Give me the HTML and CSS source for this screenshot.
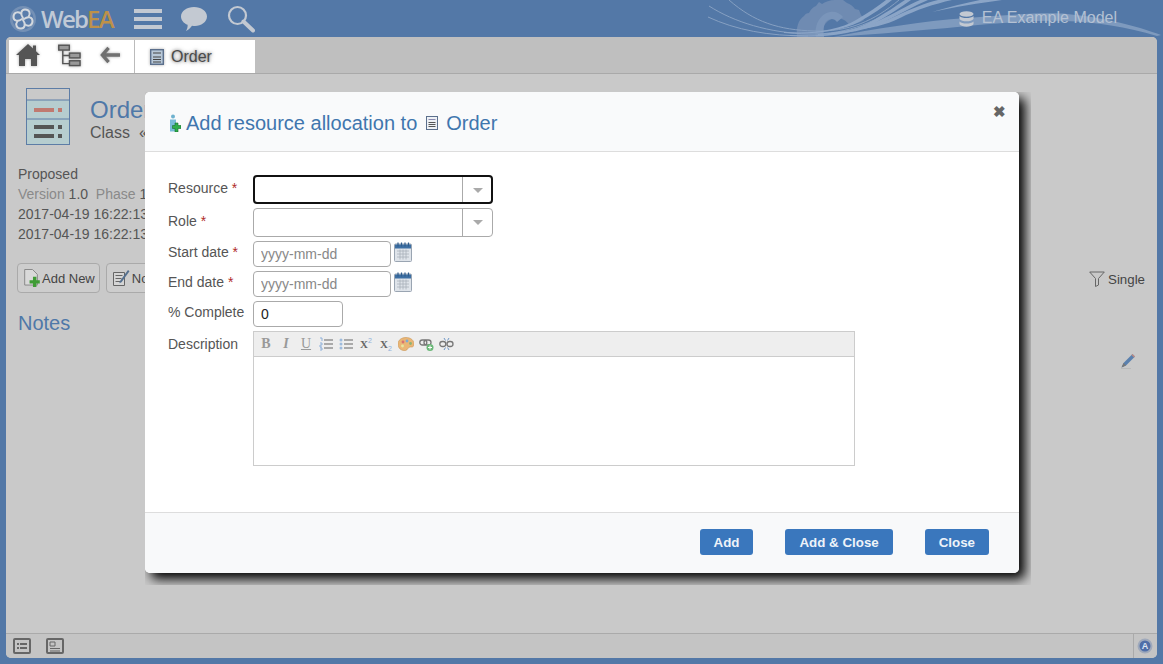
FILE: index.html
```html
<!DOCTYPE html>
<html lang="en">
<head>
<meta charset="utf-8">
<title>WebEA</title>
<link rel="stylesheet" href="styles.css">
</head>
<body>
<div class="app">
  <header class="top">
    <svg class="swirl" viewBox="0 0 463 37" width="463" height="37">
      <path d="M97 37c-1-9 1-17 7-21 1-2 3-3 5-3 2-4 4-6 7-7l3-4 3 2c3-2 8-4 13-4h8l4 3c3 1 6 3 8 6l4 1 2 5c1 1 2 3 3 5-5 3-10 4-15 5-2-4-7-7-12-7-9 0-16 8-16 19z" fill="#6f8bb2"/>
      <path d="M116 37c-2-10 3-23 14-25 5-1 10 1 13 5l-6 5c-2-3-6-4-9-2-4 2-5 8-4 17z" fill="#7a95ba"/>
      <g fill="none" stroke="#86a0c2" stroke-width="1">
        <path d="M29 0c25 22 50 30 85 31 35 1 60-10 85-31"/>
        <path d="M9 6c25 16 60 27 100 28 40 1 70-14 100-34"/>
        <path d="M8 17c28 13 60 19 100 19"/>
      </g>
      <g fill="#8ba5c7">
        <path d="M84 32c30 2 55-2 72-12 12-7 22-14 30-20h6c-9 7-20 15-33 22-18 9-45 13-75 11z"/>
        <path d="M90 35c35 2 62-3 82-14 12-7 24-15 33-21h6c-10 7-22 15-36 23-20 11-50 15-85 13z"/>
        <path d="M118 34c25-2 46-6 62-14 15-7 28-15 40-20h8c-14 6-28 14-44 22-16 8-38 12-66 13z"/>
        <path d="M150 30c18-3 34-8 48-15 13-6 27-12 40-15h14c-18 4-36 10-52 18-14 7-30 11-50 12z"/>
        <path d="M232 12c17-5 33-9 48-12h22c-22 3-48 7-70 12z"/>
      </g>
      <path d="M133 37c40-8 90-16 134-19 40-3 78-6 100-4 35 3 70 12 94 21l-4 1c-30-9-62-14-92-15-44-1-90 4-130 8-36 3-70 6-102 8z" fill="#7e9abe"/>
    </svg>
    <svg class="logo" viewBox="0 0 28 28" width="28" height="28">
      <circle cx="14" cy="14" r="13" fill="#7490b5"/>
      <circle cx="14" cy="14" r="10.500" fill="#5a7dab"/>
      <g fill="none" stroke="#d3d8de" stroke-width="2" stroke-linecap="round">
        <path d="M14 13C11 9 12 4.500 16 4.500c4.500 0 6 4 3.500 7.500"/>
        <path d="M15 14c4-3 8.500-2 8.500 2 0 4.500-4 6-7.500 3.500"/>
        <path d="M14 15c3 4 2 8.500-2 8.500-4.500 0-6-4-3.500-7.500"/>
        <path d="M13 14C9 17 4.500 16 4.500 12 4.500 7.500 8.500 6 12 8.500"/>
      </g>
    </svg>
    <span class="brand">Web<span class="brand-ea">EA</span></span>
    <svg class="hamburger" viewBox="0 0 28 20" width="28" height="20"><path d="M0 0h28v4H0zM0 8h28v4H0zM0 16h28v4H0z" fill="#c3c9d2"/></svg>
    <svg class="chat" viewBox="0 0 26 24" width="26" height="24"><path d="M13 0c7 0 13 4 13 9.500S20 19 14 19c-1 0-2 0-3-.2C9.500 21 7.500 23 5 24c1.200-2 1.800-4 1.600-6.200C2.500 16.200 0 13 0 9.500 0 4 6 0 13 0z" fill="#c3c9d2"/></svg>
    <svg class="search" viewBox="0 0 28 28" width="28" height="28"><circle cx="10.500" cy="10.500" r="8.500" fill="none" stroke="#c3c9d2" stroke-width="2.200"/><path d="M16.500 16.500L26 25.500" stroke="#c3c9d2" stroke-width="4" stroke-linecap="round"/></svg>
    <div class="model">
      <svg viewBox="0 0 15 16" width="15" height="16"><g fill="#c3c9d2"><ellipse cx="7.500" cy="3" rx="7" ry="2.800"/><path d="M.5 5c1.500 1.500 4 2 7 2s5.500-.5 7-2v3c-1 1.500-4 2.300-7 2.300S1.500 9.500.5 8zM.5 10.500c1.500 1.500 4 2 7 2s5.500-.5 7-2v2.700c-1 1.500-4 2.500-7 2.500s-6-1-7-2.500z"/></g></svg>
      <span>EA Example Model</span>
    </div>
  </header>

  <main class="panel">
    <div class="toolbar">
      <nav class="crumbs">
        <div class="crumb-icons">
          <svg class="soft" viewBox="0 0 24 22" width="24" height="22"><path d="M12 0l5 4.500V1.500h3v5.700l4 3.800h-3v11h-6v-7H9v7H3V11H0z" fill="#555"/></svg>
          <svg class="soft" viewBox="0 0 24 23" width="23" height="23"><g fill="#999" stroke="#555" stroke-width="1.500"><rect x=".8" y=".8" width="11" height="5"/><rect x="12" y="9" width="11" height="5"/><rect x="12" y="17" width="11" height="5"/></g><path d="M5 6v14h7M5 11.500h7" fill="none" stroke="#555" stroke-width="1.500"/></svg>
          <svg class="soft back" viewBox="0 0 21 18" width="20" height="18"><path d="M9 1.500L2.500 9 9 16.500M3 9h18" fill="none" stroke="#707070" stroke-width="3.500"/></svg>
        </div>
        <div class="crumb-current">
          <svg class="soft" viewBox="0 0 14 16" width="14" height="16"><rect x=".7" y=".7" width="12.600" height="14.600" fill="#b8c8d8" stroke="#5b6f8c" stroke-width="1.400"/><path d="M3 4h8M3 8h8M3 10.500h8M3 13h8" stroke="#444" stroke-width="1.200"/></svg>
          <span>Order</span>
        </div>
      </nav>
    </div>

    <div class="content">
      <div class="title-row">
        <svg class="class-icon" viewBox="0 0 44 57" width="44" height="57">
          <rect x=".5" y=".5" width="43" height="56" fill="#b6cdcf" stroke="#5d7da6"/>
          <rect x="1" y="1" width="42" height="11" fill="#c9c9c9"/>
          <path d="M0 12h44M0 31h44" stroke="#5d7da6"/>
          <path d="M8 20h20v4H8zM32 20h4v4h-4z" fill="#c07a70"/>
          <path d="M8 37h20v4H8zM32 37h4v4h-4zM8 46h20v4H8zM32 46h4v4h-4z" fill="#555"/>
        </svg>
        <div class="title-text">
          <h1>Order</h1>
          <p>Class &nbsp;«class»</p>
        </div>
      </div>
      <ul class="meta">
        <li>Proposed</li>
        <li><span class="dim">Version</span> 1.0 &nbsp;<span class="dim">Phase</span> 1.0</li>
        <li>2017-04-19 16:22:13</li>
        <li>2017-04-19 16:22:13</li>
      </ul>
      <div class="actions">
        <button class="act" type="button">
          <svg viewBox="0 0 16 18.500" width="16" height="18"><path d="M.5.5h8l5 5v11H.5z" fill="#d9d9d9" stroke="#888"/><path d="M9 8h3.500v3.500H16V15h-3.500v3.500H9V15H5.500v-3.500H9z" fill="#3f9c35"/></svg>
          Add New
        </button>
        <button class="act" type="button">
          <svg viewBox="0 0 17 18" width="17" height="18"><path d="M.5 3.500h11v13H.5z" fill="#d5d5d5" stroke="#666"/><path d="M2.500 6.500h7M2.500 9.500h6M2.500 12.500h5" stroke="#666"/><path d="M7 12l8-11 1.500 1.200-8 11-2.200 1z" fill="#55708f"/></svg>
          Notes
        </button>
        <div class="filter">
          <svg viewBox="0 0 16 16" width="16" height="16"><path d="M.7 1h14.600L9.500 7.500v6.500L6.500 15.500v-8z" fill="none" stroke="#666"/></svg>
          Single
        </div>
      </div>
      <div class="notes-head">
        <h2>Notes</h2>
        <svg viewBox="0 0 16 16" width="16" height="16"><path d="M1.500 14.500L3.500 10 12.500 1 15 3.500 6 12.500z" fill="#5a80ae"/><path d="M12.500 1L15 3.500 14 4.500 11.500 2z" fill="#c08a80"/><path d="M1.500 14.500L3.500 10l2.500 2.500z" fill="#777"/><path d="M1 16h10" stroke="#aaa"/></svg>
      </div>
    </div>

    <footer class="status">
      <svg viewBox="0 0 18 16" width="18" height="16"><rect x="1" y="1" width="16" height="14" rx="1" fill="#c4c4c4" stroke="#666" stroke-width="2"/><path d="M4 5h2v2H4zM7 5h7v2H7zM4 9h2v2H4zM7 9h7v2H7z" fill="#666"/></svg>
      <svg viewBox="0 0 18 16" width="18" height="16"><rect x="1" y="1" width="16" height="14" rx="1" fill="#c4c4c4" stroke="#666" stroke-width="2"/><path d="M4 4h5v4H4z" fill="none" stroke="#666"/><path d="M4 10h10v1H4zM4 12.500h10v1H4z" fill="#666"/></svg>
      <div class="status-end">
        <svg viewBox="0 0 16 16" width="16" height="16"><circle cx="8" cy="8" r="7.500" fill="#9fa9bb"/><circle cx="8" cy="8" r="5.500" fill="#4f6ea8"/><text class="badge-letter" x="8" y="11">A</text></svg>
      </div>
    </footer>
  </main>

  <section class="modal">
    <div class="modal-head">
      <h3>
        <svg viewBox="0 0 12 18" width="12" height="18"><circle cx="4" cy="2.500" r="2" fill="#6fb2cf"/><path d="M1 5.500h6v12H1z" fill="#78bcd8"/><path d="M6 9h3v2.500h3v3H9V18H6v-3.500H3.500v-3H6z" fill="#2eae4a" stroke="#166d2c" stroke-width=".6"/></svg>
        <span>Add resource allocation to</span>
        <svg class="h-doc" viewBox="0 0 12 14" width="12" height="14"><rect x=".5" y=".5" width="11" height="13" fill="#eef1f5" stroke="#5b6f8c"/><path d="M2.500 3.500h7" stroke="#8a8ab0"/><path d="M2.500 6.500h7M2.500 8.500h7M2.500 10.500h7" stroke="#555"/></svg>
        <span>Order</span>
      </h3>
      <span class="close">✖</span>
    </div>
    <form class="modal-body">
      <div class="row row-combo">
        <label>Resource <em>*</em></label>
        <div class="combo focus"><span class="arrow"></span></div>
      </div>
      <div class="row row-combo">
        <label>Role <em>*</em></label>
        <div class="combo"><span class="arrow"></span></div>
      </div>
      <div class="row">
        <label>Start date <em>*</em></label>
        <input class="date" type="text" placeholder="yyyy-mm-dd">
        <svg class="cal" viewBox="0 0 18 20" width="18" height="20"><rect x=".5" y="2" width="17" height="17.500" rx="1" fill="#dfe4ea" stroke="#9aa5b2"/><path d="M1 2.500h16v4H1z" fill="#3d6fa3"/><path d="M4 .5v4M7.500.5v4M11 .5v4M14.500.5v4" stroke="#2f5c8c" stroke-width="1.200"/><path d="M3 9h12M3 12h12M3 15h12M6 7.500v10M9 7.500v10M12 7.500v10" stroke="#a8b0ba" stroke-width=".8"/></svg>
      </div>
      <div class="row">
        <label>End date <em>*</em></label>
        <input class="date" type="text" placeholder="yyyy-mm-dd">
        <svg class="cal" viewBox="0 0 18 20" width="18" height="20"><rect x=".5" y="2" width="17" height="17.500" rx="1" fill="#dfe4ea" stroke="#9aa5b2"/><path d="M1 2.500h16v4H1z" fill="#3d6fa3"/><path d="M4 .5v4M7.500.5v4M11 .5v4M14.500.5v4" stroke="#2f5c8c" stroke-width="1.200"/><path d="M3 9h12M3 12h12M3 15h12M6 7.500v10M9 7.500v10M12 7.500v10" stroke="#a8b0ba" stroke-width=".8"/></svg>
      </div>
      <div class="row">
        <label>% Complete</label>
        <input class="pct" type="text" value="0">
      </div>
      <div class="row row-editor">
        <label class="desc-label">Description</label>
        <div class="editor">
          <div class="editor-bar">
            <span class="tb tb-b">B</span>
            <span class="tb tb-i">I</span>
            <span class="tb tb-u">U</span>
            <svg viewBox="0 0 14 14" width="14" height="14"><path d="M5 3h9M5 7h9M5 11h9" stroke="#666"/><path d="M1 1h2v3M1 6h2v2H1v2h2M1 11h2v2H1" fill="none" stroke="#8fb1da"/></svg>
            <svg viewBox="0 0 14 14" width="14" height="14"><path d="M5 3h9M5 7h9M5 11h9" stroke="#666"/><circle cx="2" cy="3" r="1.500" fill="#9dbbdd"/><circle cx="2" cy="7" r="1.500" fill="#9dbbdd"/><circle cx="2" cy="11" r="1.500" fill="#9dbbdd"/></svg>
            <span class="tb tb-x">X<sup>2</sup></span>
            <span class="tb tb-x">X<sub>2</sub></span>
            <svg viewBox="0 0 16 14" width="16" height="14"><path d="M8 .5C13 .5 16 3.500 16 7s-2.500 3-4 3c-2 0-2 3-4.500 3.500C3 14 0 11 0 7S3.500.5 8 .5z" fill="#eab676" stroke="#c99554" stroke-width=".6"/><circle cx="5" cy="5" r="1.400" fill="#d9736f"/><circle cx="9" cy="4" r="1.400" fill="#7baad5"/><circle cx="12.500" cy="6.500" r="1.400" fill="#8db376"/><circle cx="4.500" cy="9" r="1.400" fill="#e7e7a0"/></svg>
            <svg viewBox="0 0 15 14" width="15" height="14"><rect x=".8" y="3" width="7" height="5" rx="2.500" fill="none" stroke="#777" stroke-width="1.300"/><rect x="5" y="3" width="7" height="5" rx="2.500" fill="none" stroke="#777" stroke-width="1.300"/><circle cx="11" cy="10.500" r="3.500" fill="#6bb878"/><path d="M11 8.500v4M9 10.500h4" stroke="#fff"/></svg>
            <svg viewBox="0 0 15 14" width="15" height="14"><rect x=".8" y="4.500" width="6" height="5" rx="2.500" fill="none" stroke="#777" stroke-width="1.300"/><rect x="8" y="4.500" width="6" height="5" rx="2.500" fill="none" stroke="#777" stroke-width="1.300"/><path d="M5 1l1.500 2.500M10 1L8.500 3.500M5 13l1.500-2.500M10 13l-1.500-2.500" stroke="#6d96c6"/></svg>
          </div>
          <div class="editor-area"></div>
        </div>
      </div>
    </form>
    <div class="modal-foot">
      <button class="btn" type="button">Add</button>
      <button class="btn" type="button">Add &amp; Close</button>
      <button class="btn" type="button">Close</button>
    </div>
  </section>
</div>
</body>
</html>
```
FILE: styles.css
```css
* { box-sizing: border-box; }
html, body { margin: 0; height: 100%; }
body {
  font-family: "Liberation Sans", Arial, sans-serif;
  font-size: 14px;
  color: #555;
  background: #5378a7;
  overflow: hidden;
}
h1, h2, h3, p, ul { margin: 0; padding: 0; font-weight: 400; }
ul { list-style: none; }
svg { display: block; flex: none; }

.app { position: relative; width: 1163px; height: 664px; display: flex; flex-direction: column; }

/* top bar */
.top { position: relative; height: 37px; display: flex; align-items: center; padding: 0 46px 0 9px; flex: none; }
.swirl { position: absolute; right: 0; top: 0; }
.logo { position: relative; }
.brand { font-family: "Open Sans", sans-serif; font-size: 24px; font-weight: 600; letter-spacing: -1.800px; color: #c0c9d6; margin-left: 4px; width: 82px; position: relative; }
.brand-ea { color: #bd9149; }
.hamburger { margin-left: 11px; position: relative; }
.chat { margin-left: 19px; position: relative; }
.search { margin-left: 20px; position: relative; }
.model { margin-left: auto; display: flex; align-items: center; gap: 8px; font-size: 16px; color: #b4c1d3; position: relative; }
.model span { margin-top: -2px; }

/* panel */
.panel { flex: 1; margin: 0 6px 6px; background: #c9c9c9; border-radius: 5px; display: flex; flex-direction: column; overflow: hidden; min-height: 0; }
.toolbar { height: 37px; flex: none; background: #bfbfbf; border-bottom: 1px solid #a9a9a9; padding: 3px 0 0 3px; display: flex; }
.crumbs { display: flex; background: #fff; width: 246px; }
.crumb-icons { width: 126px; display: flex; align-items: center; gap: 18px; padding: 0 0 3px 7px; border-right: 1px solid #bbb; }
.back { margin-left: 1px; }
.crumb-current { display: flex; align-items: center; gap: 7px; padding: 0 0 0 15px; font-size: 16px; color: #4a4a4a; text-shadow: 0 0 3px #888, 0 0 5px #aaa; }
.soft { filter: drop-shadow(0 0 1.5px #aaa); }

.content { flex: 1; padding: 14px 12px 0; min-height: 0; }
.title-row { display: flex; gap: 20px; padding-left: 8px; }
.title-text { padding-top: 8px; }
.title-text h1 { font-size: 24px; line-height: 28px; color: #4f78a8; }
.title-text p { font-size: 16px; line-height: 18px; color: #555; }
.meta { margin-top: 19px; line-height: 20px; }
.dim { color: #8a8a8a; }
.actions { display: flex; align-items: center; gap: 6px; margin-top: 19px; height: 30px; }
.act { display: flex; align-items: center; gap: 2px; height: 30px; padding: 0 4px 0 6px; font: 13px "Liberation Sans", Arial, sans-serif; color: #444; background: #cdcdcd; border: 1px solid #aaa; border-radius: 4px; }
.act:first-child { margin-left: -1px; }
.filter { margin-left: auto; margin-top: 2px; display: flex; align-items: center; gap: 3px; font-size: 13.3px; color: #444; }
.filter svg { margin-left: -1px; }
.notes-head { display: flex; justify-content: space-between; align-items: flex-start; margin-top: 19px; padding-right: 9px; }
.notes-head h2 { font-size: 20px; line-height: 23px; color: #4f78a8; }
.notes-head svg { margin-top: 41px; }

.status { height: 25px; flex: none; background: #c4c4c4; border-top: 1px solid #aaa; display: flex; align-items: center; gap: 15px; padding-left: 7px; }
.status-end { margin-left: auto; width: 24px; height: 100%; border-left: 1px solid #aaa; display: flex; align-items: center; padding-left: 3px; }
.badge-letter { font-size: 9px; font-weight: 700; fill: #dfe6f2; text-anchor: middle; }

/* modal */
.modal { position: absolute; left: 145px; top: 92px; width: 874px; height: 481px; background: #fff; border-radius: 5px; display: flex; flex-direction: column; box-shadow: 6px 6px 12px #000; clip-path: inset(0 -12px -12px 0); }
.modal-head { height: 60px; flex: none; display: flex; justify-content: space-between; background: #f9fafb; border-bottom: 1px solid #ddd; border-radius: 5px 5px 0 0; padding: 12px 13px 0 24px; }
.modal-head h3 { display: flex; align-items: center; height: 38px; font-size: 20px; color: #3f76ae; }
.modal-head h3 span { margin-left: 5px; }
.h-doc { margin-left: 9px; }
.modal-head h3 .h-doc + span { margin-left: 8px; }
.close { font-size: 15px; font-weight: 700; color: #666; line-height: 16px; }

.modal-body { flex: 1; padding: 23px 0 0 23px; display: flex; flex-direction: column; gap: 4px; min-height: 0; }
.row { display: flex; align-items: flex-start; height: 26px; }
.row-combo { height: 29px; }
.row label { width: 85px; flex: none; padding-top: 2px; color: #555; line-height: 18px; }
.row-combo label { padding-top: 4px; }
.row em { color: #b02a2a; font-style: normal; }
.combo { position: relative; width: 240px; height: 29px; border: 1px solid #aaa; border-radius: 4px; background: #fff; }
.combo.focus { border: 2px solid #111; }
.arrow { position: absolute; right: 0; top: 0; bottom: 0; width: 30px; border-left: 1px solid #aaa; }
.focus .arrow { width: 29px; }
.arrow::after { content: ""; position: absolute; left: 10px; top: 11px; border: 5px solid transparent; border-top: 5px solid #aaa; border-bottom: 0; }
.date, .pct { height: 26px; border: 1px solid #aaa; border-radius: 4px; padding: 0 7px; font: 14px "Liberation Sans", Arial, sans-serif; color: #222; background: #fff; outline: 0; }
.date { width: 138px; }
.date::placeholder { color: #888; opacity: 1; }
.pct { width: 90px; }
.cal { margin: 1px 0 0 3px; }
.row-editor { height: 135px; }
.row .desc-label { padding-top: 4px; }
.editor { width: 602px; height: 135px; border: 1px solid #ccc; display: flex; flex-direction: column; }
.editor-bar { height: 25px; flex: none; background: #eee; border-bottom: 1px solid #ccc; display: grid; grid-template-columns: repeat(10, 20px); align-items: center; justify-items: center; padding-left: 2px; }
.tb { width: 14px; text-align: center; font-family: "Liberation Serif", serif; font-size: 14px; line-height: 14px; color: #999; }
.tb-b { font-weight: 700; }
.tb-i { font-style: italic; font-weight: 700; }
.tb-u { text-decoration: underline; }
.tb-x { font-weight: 700; font-size: 11px; color: #666; white-space: nowrap; }
.tb-x sup, .tb-x sub { font-size: 7px; color: #8fb1da; line-height: 0; font-family: "Liberation Sans", sans-serif; font-weight: 400; }
.editor-area { flex: 1; background: #fff; }

.modal-foot { height: 61px; flex: none; display: flex; justify-content: flex-end; gap: 32px; background: #f8f9fa; border-top: 1px solid #ddd; border-radius: 0 0 5px 5px; padding: 16px 30px 0 0; }
.btn { height: 26px; padding: 0 14px; font: 700 13.330px "Liberation Sans", Arial, sans-serif; color: #eef3f9; background: #3a77bd; border: 0; border-radius: 3px; }
```
